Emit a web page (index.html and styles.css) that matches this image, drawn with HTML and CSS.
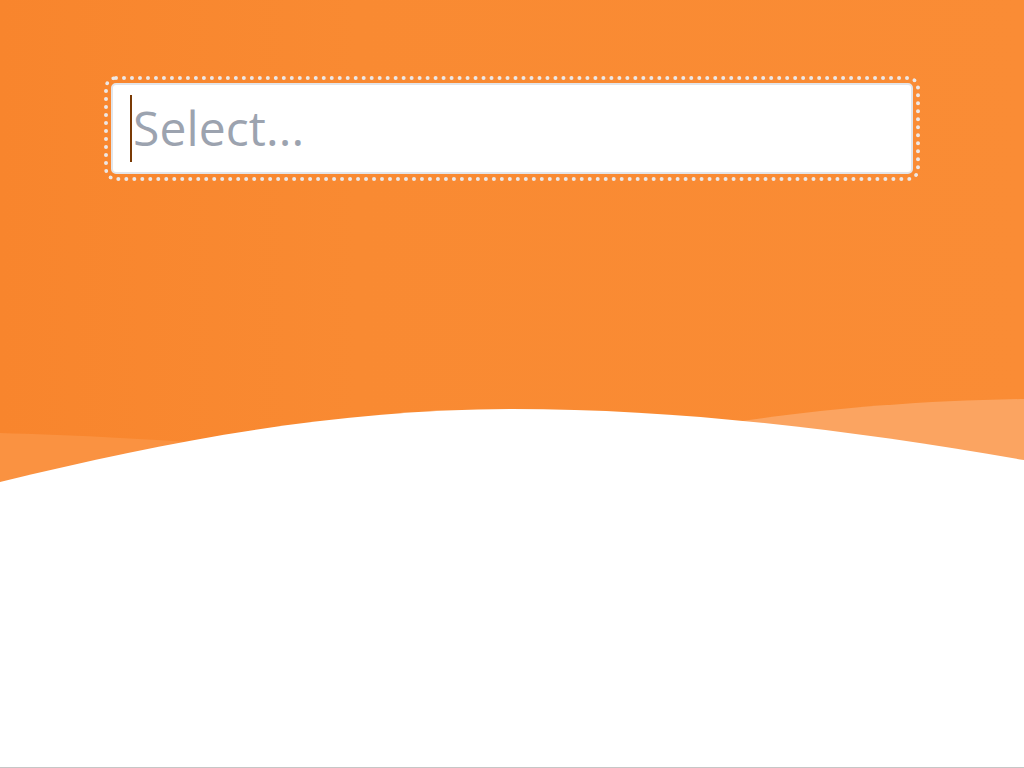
FILE: index.html
```html
<!DOCTYPE html>
<html lang="en">
<head>
<meta charset="utf-8">
<title>Select</title>
<link rel="stylesheet" href="styles.css">
</head>
<body>
<div class="page">
  <svg class="waves" viewBox="0 0 1024 767" preserveAspectRatio="none" aria-hidden="true">
    <defs>
      <linearGradient id="bg" x1="0" y1="0" x2="1" y2="0">
        <stop offset="0" stop-color="#f8852d"/>
        <stop offset="0.35" stop-color="#f98a32"/>
        <stop offset="1" stop-color="#fa8c35"/>
      </linearGradient>
    </defs>
    <rect x="0" y="0" width="1024" height="767" fill="url(#bg)"/>
    <path d="M0,433 C70,435 130,438 220,444 L220,767 L0,767 Z" fill="#fa9241"/>
    <path d="M700,428 C790,412 900,401 1024,399 L1024,767 L700,767 Z" fill="#fba461"/>
    <path d="M0,482 C170,440 340,409 512,409 C680,409 850,430 1024,460 L1024,767 L0,767 Z" fill="#ffffff"/>
  </svg>
  <div class="content">
    <div class="select">
      <span class="caret"></span>
      <span class="placeholder">Select...</span>
    </div>
  </div>
</div>
</body>
</html>
```
FILE: styles.css
```css
html, body {
  margin: 0;
  padding: 0;
}
body {
  background: #ffffff;
  font-family: "Open Sans", "Noto Sans", sans-serif;
}
.page {
  position: relative;
  width: 1024px;
  height: 767px;
  border-bottom: 1px solid #c6c6c6;
  overflow: hidden;
}
.waves {
  position: absolute;
  inset: 0;
  width: 1024px;
  height: 767px;
  display: block;
}
.content {
  position: relative;
  padding: 83px 0 0 111px;
}
.select {
  box-sizing: border-box;
  width: 802px;
  height: 91px;
  background: #ffffff;
  border: 2px solid #e3e5e9;
  border-radius: 5px;
  outline: 4px dotted rgba(236, 236, 240, 0.95);
  outline-offset: 3px;
  display: flex;
  align-items: center;
  padding-left: 17px;
}
.caret {
  width: 2px;
  height: 67px;
  background: #7a3a05;
  flex: none;
}
.placeholder {
  color: #9ca3af;
  font-size: 48px;
  line-height: 1;
  margin-left: 1px;
  letter-spacing: 0.1px;
  position: relative;
  top: -1px;
}
```
